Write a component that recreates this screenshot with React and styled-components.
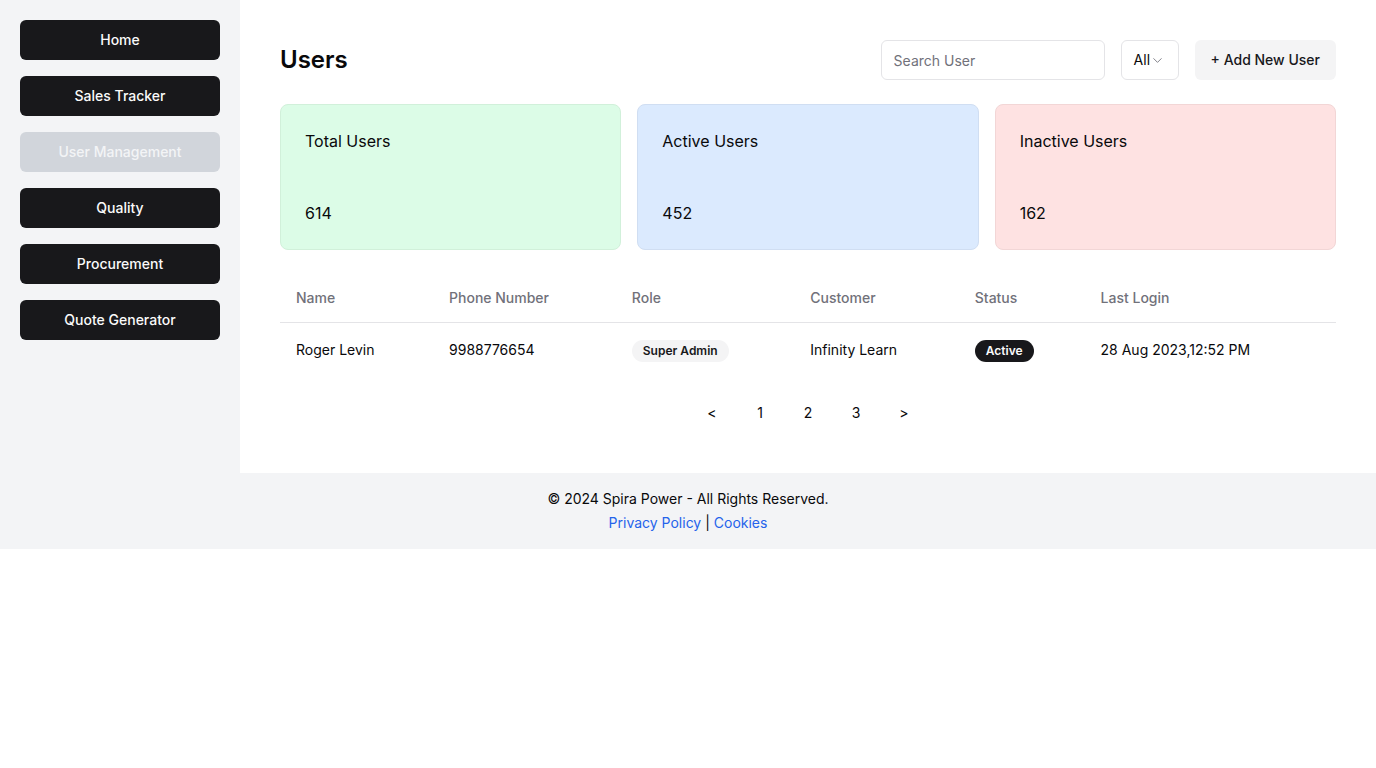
import styled, { createGlobalStyle } from "styled-components";
import { ChevronDown } from "lucide-react";

const Global = createGlobalStyle`
    body {
        margin: 0;
        font-family: Inter, "Liberation Sans", sans-serif;
        color: #09090b;
        background: #fff;
    }
    * { box-sizing: border-box; }
`;

const Shell = styled.div`
    display: flex;
`;

const Sidebar = styled.nav`
    width: 240px;
    flex: 0 0 240px;
    background: #f3f4f6;
    padding: 20px;
    display: flex;
    flex-direction: column;
    gap: 16px;
`;

const NavButton = styled.button`
    height: 40px;
    border: none;
    border-radius: 6px;
    padding: 0 0 2px;
    background: ${p => (p.$active ? "#d1d5db" : "#18181b")};
    color: ${p => (p.$active ? "#f3f4f6" : "#fafafa")};
    font-family: inherit;
    font-size: 14px;
    font-weight: 500;
    cursor: pointer;
`;

const Main = styled.main`
    flex: 1;
    padding: 40px 40px 40px;
`;

const Header = styled.div`
    display: flex;
    align-items: center;
    justify-content: space-between;
    margin-bottom: 24px;
`;

const Title = styled.h1`
    margin: 0;
    font-size: 24px;
    font-weight: 600;
    line-height: 32px;
`;

const Tools = styled.div`
    display: flex;
    gap: 16px;
`;

const Search = styled.input`
    width: 224px;
    height: 40px;
    border: 1px solid #e4e4e7;
    border-radius: 6px;
    padding: 0 12px;
    font-family: inherit;
    font-size: 14px;
    &::placeholder { color: #71717a; }
`;

const Select = styled.div`
    width: 58px;
    height: 40px;
    border: 1px solid #e4e4e7;
    border-radius: 6px;
    display: flex;
    align-items: center;
    padding: 0 0 1px 12px;
    font-size: 14px;
    svg { color: #71717a; margin-top: 1px; }
`;

const AddButton = styled.button`
    height: 40px;
    padding: 0 16px 2px;
    border: none;
    border-radius: 6px;
    background: #f4f4f5;
    color: #18181b;
    font-family: inherit;
    font-size: 14px;
    font-weight: 500;
`;

const Cards = styled.div`
    display: grid;
    grid-template-columns: repeat(3, 1fr);
    gap: 16px;
    margin-bottom: 24px;
`;

const tones = {
    green: ["#dcfce7", "#d1f0da"],
    blue: ["#dbeafe", "#d0def2"],
    red: ["#fee2e2", "#f2d6d6"],
};

const Card = styled.div`
    background: ${p => tones[p.$tone][0]};
    border: 1px solid ${p => tones[p.$tone][1]};
    border-radius: 8px;
    padding: 24px;
    display: flex;
    flex-direction: column;
    gap: 48px;
    font-size: 16px;
    line-height: 24px;
`;

const Table = styled.table`
    width: 100%;
    border-collapse: collapse;
    font-size: 14px;
`;

const Th = styled.th`
    text-align: left;
    font-weight: 500;
    color: #71717a;
    height: 48px;
    padding: 0 16px;
    border-bottom: 1px solid #e4e4e7;
`;

const Td = styled.td`
    padding: 16px;
    line-height: 22px;
`;

const Badge = styled.span`
    display: inline-block;
    padding: 2px 11px;
    border-radius: 999px;
    font-size: 12px;
    font-weight: 600;
    line-height: 18px;
    background: ${p => (p.$dark ? "#18181b" : "#f4f4f5")};
    color: ${p => (p.$dark ? "#fafafa" : "#18181b")};
`;

const Pager = styled.div`
    display: flex;
    justify-content: center;
    margin-top: 15px;
`;

const PageItem = styled.button`
    width: 48px;
    height: 40px;
    border: none;
    background: none;
    font-family: inherit;
    font-size: 14px;
    color: #09090b;
`;

const Footer = styled.footer`
    background: #f3f4f6;
    text-align: center;
    font-size: 14px;
    line-height: 24px;
    padding: 14px 0 14px;
`;

const Link = styled.a`
    color: #2563eb;
    text-decoration: none;
`;

const navItems = ["Home", "Sales Tracker", "User Management", "Quality", "Procurement", "Quote Generator"];

const users = [
    { name: "Roger Levin", phone: "9988776654", role: "Super Admin", customer: "Infinity Learn", status: "Active", login: "28 Aug 2023,12:52 PM" },
];

const App = () => {
    return (
        <>
            <Global />
            <Shell>
                <Sidebar>
                    {navItems.map(item => (
                        <NavButton key={item} $active={item === "User Management"}>{item}</NavButton>
                    ))}
                </Sidebar>
                <Main>
                    <Header>
                        <Title>Users</Title>
                        <Tools>
                            <Search placeholder="Search User" />
                            <Select>All<ChevronDown size={15} strokeWidth={1.4} /></Select>
                            <AddButton>+ Add New User</AddButton>
                        </Tools>
                    </Header>
                    <Cards>
                        <Card $tone="green"><span>Total Users</span><span>614</span></Card>
                        <Card $tone="blue"><span>Active Users</span><span>452</span></Card>
                        <Card $tone="red"><span>Inactive Users</span><span>162</span></Card>
                    </Cards>
                    <Table>
                        <thead>
                            <tr>
                                <Th>Name</Th>
                                <Th>Phone Number</Th>
                                <Th>Role</Th>
                                <Th>Customer</Th>
                                <Th>Status</Th>
                                <Th>Last Login</Th>
                            </tr>
                        </thead>
                        <tbody>
                            {users.map(u => (
                                <tr key={u.phone}>
                                    <Td>{u.name}</Td>
                                    <Td>{u.phone}</Td>
                                    <Td><Badge>{u.role}</Badge></Td>
                                    <Td>{u.customer}</Td>
                                    <Td><Badge $dark>{u.status}</Badge></Td>
                                    <Td>{u.login}</Td>
                                </tr>
                            ))}
                        </tbody>
                    </Table>
                    <Pager>
                        {["<", "1", "2", "3", ">"].map(p => <PageItem key={p}>{p}</PageItem>)}
                    </Pager>
                </Main>
            </Shell>
            <Footer>
                <div>© 2024 Spira Power - All Rights Reserved.</div>
                <div><Link href="#">Privacy Policy</Link> | <Link href="#">Cookies</Link></div>
            </Footer>
        </>
    );
};

export default App;
